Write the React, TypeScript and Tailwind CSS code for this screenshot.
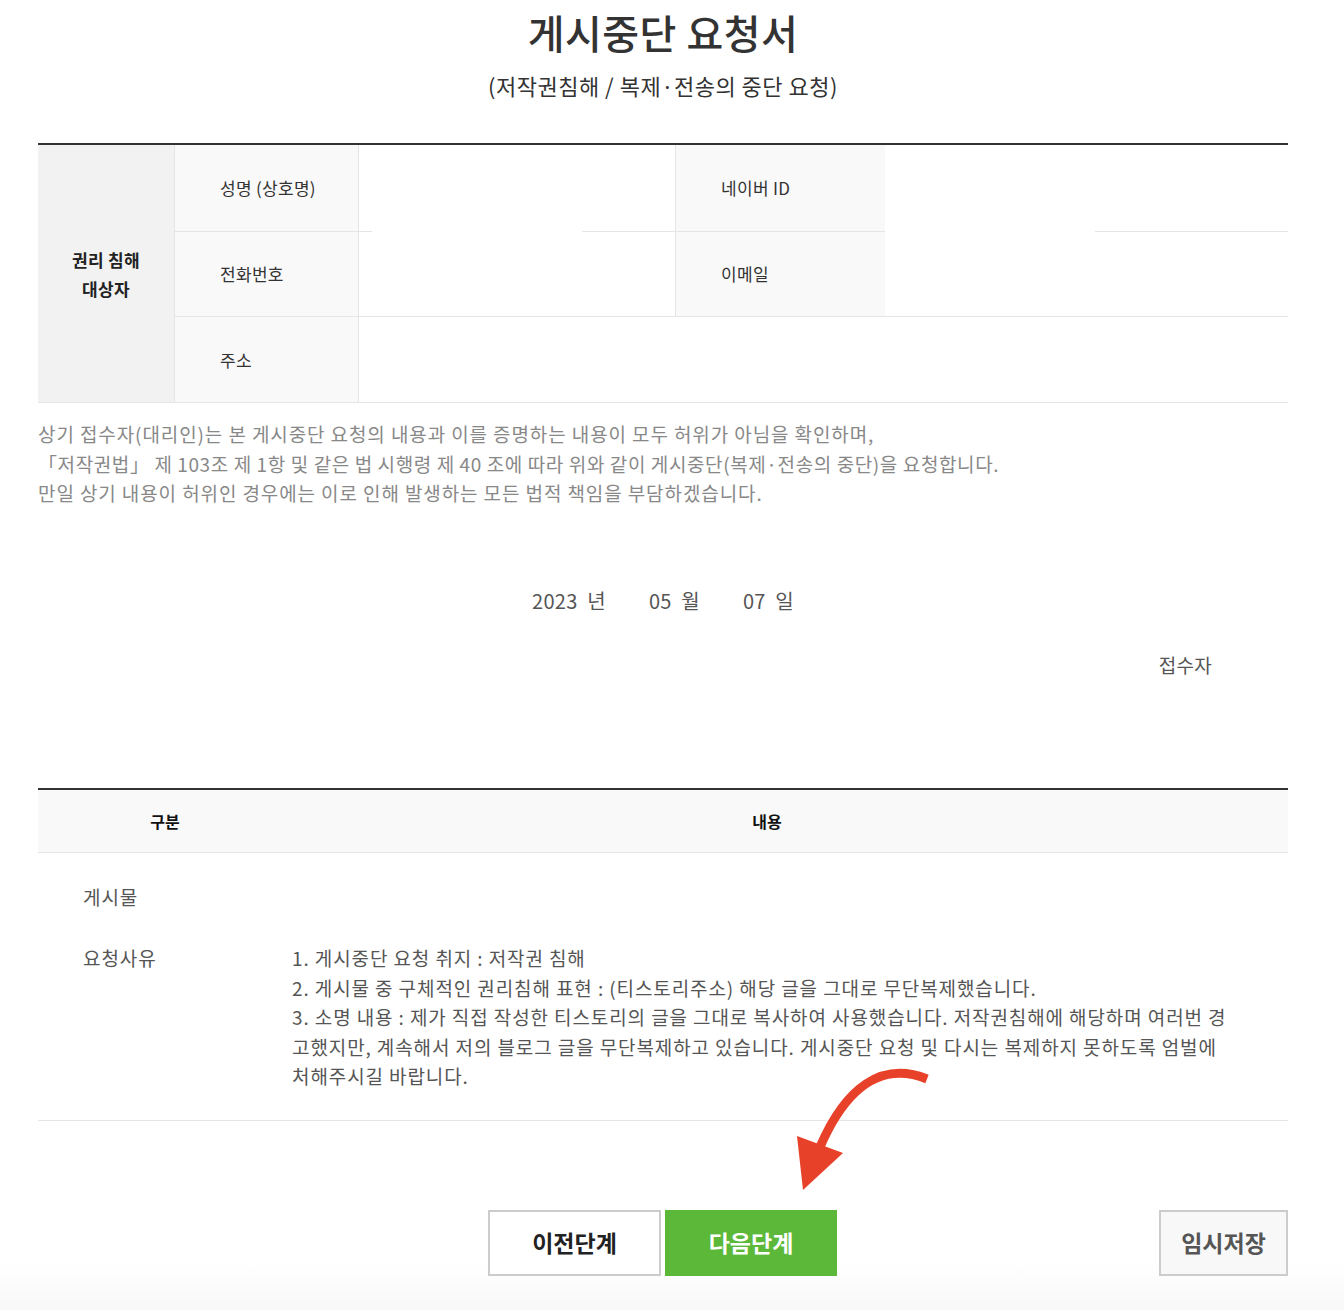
import React from 'react';

const font = "font-['Noto_Sans_CJK_KR','Noto_Sans',sans-serif]";

// 구분 / 내용 표의 요청사유 문단
const reasons = [
  '1. 게시중단 요청 취지 : 저작권 침해',
  '2. 게시물 중 구체적인 권리침해 표현 : (티스토리주소) 해당 글을 그대로 무단복제했습니다.',
  '3. 소명 내용 : 제가 직접 작성한 티스토리의 글을 그대로 복사하여 사용했습니다. 저작권침해에 해당하며 여러번 경고했지만, 계속해서 저의 블로그 글을 무단복제하고 있습니다. 게시중단 요청 및 다시는 복제하지 못하도록 엄벌에 처해주시길 바랍니다.',
];

const LabelCell = ({ children, width }: { children: React.ReactNode; width: string }) => (
  <div className={`${width} shrink-0 flex items-center border-l border-[#e5e5e5] bg-[#f9f9f9] pl-[45px] text-[17px] tracking-[0.3px] text-[#333]`}>
    {children}
  </div>
);

const RowDivider = () => (
  // 입력칸에 가려진 구분선 모양 그대로
  <div className="flex h-px">
    <div className="w-[198px] bg-[#e5e5e5]" />
    <div className="w-[210px]" />
    <div className="w-[303px] bg-[#e5e5e5]" />
    <div className="w-[210px]" />
    <div className="flex-1 bg-[#e5e5e5]" />
  </div>
);

const ArrowMark = () => (
  <svg className="absolute left-[790px] top-[1065px]" width="150" height="130" viewBox="0 0 150 130" fill="none">
    <path d="M137 14 C92 -4 56 22 30 82" stroke="#e8412a" strokeWidth="9" fill="none" />
    <polygon points="7,71 53,88 13,125" fill="#e8412a" />
  </svg>
);

const App = () => {
  return (
    <div className={`${font} relative min-h-[1310px] bg-[linear-gradient(to_bottom,#ffffff_1262px,#f8f8f8_1310px)]`}>
      <div className="ml-[38px] w-[1250px]">
        <div className="pt-[8px] text-center">
          <h1 className="text-[40px] leading-[48px] font-medium tracking-[0.5px] text-[#333]">게시중단 요청서</h1>
          <p className="mt-[14px] text-[22px] leading-[30px] tracking-[0.5px] text-[#333]">(저작권침해 / 복제·전송의 중단 요청)</p>
        </div>

        {/* 권리 침해 대상자 */}
        <div className="mt-[43px] flex border-t-2 border-[#333] border-b border-b-[#e5e5e5]">
          <div className="w-[136px] shrink-0 flex items-center justify-center bg-[#f2f2f2] text-center text-[17px] font-bold leading-[29px] tracking-[0.3px] text-[#222]">
            권리 침해<br />대상자
          </div>
          <div className="flex-1">
            <div className="flex h-[86px]">
              <LabelCell width="w-[184px]">성명 (상호명)</LabelCell>
              <div className="w-[317px] shrink-0 border-l border-[#e5e5e5]" />
              <LabelCell width="w-[210px]">네이버 ID</LabelCell>
              <div className="flex-1" />
            </div>
            <RowDivider />
            <div className="flex h-[85px] border-b border-[#e5e5e5]">
              <LabelCell width="w-[184px]">전화번호</LabelCell>
              <div className="w-[317px] shrink-0 border-l border-[#e5e5e5]" />
              <LabelCell width="w-[210px]">이메일</LabelCell>
              <div className="flex-1" />
            </div>
            <div className="flex h-[85px]">
              <LabelCell width="w-[184px]">주소</LabelCell>
              <div className="flex-1 border-l border-[#e5e5e5]" />
            </div>
          </div>
        </div>

        <div className="mt-[16px] text-[19px] leading-[29.5px] tracking-[0.9px] text-[#888]">
          <p>상기 접수자(대리인)는 본 게시중단 요청의 내용과 이를 증명하는 내용이 모두 허위가 아님을 확인하며,</p>
          <p className="tracking-[0.6px]">「저작권법」 제 103조 제 1항 및 같은 법 시행령 제 40 조에 따라 위와 같이 게시중단(복제·전송의 중단)을 요청합니다.</p>
          <p>만일 상기 내용이 허위인 경우에는 이로 인해 발생하는 모든 법적 책임을 부담하겠습니다.</p>
        </div>

        <div className="mt-[78px] flex justify-center gap-[43px] text-[20px] leading-[30px] tracking-[0.3px] text-[#555]">
          <span>2023&nbsp; 년</span>
          <span>05&nbsp; 월</span>
          <span>07&nbsp; 일</span>
        </div>

        <div className="mt-[34px] pr-[76px] text-right text-[19px] leading-[30px] tracking-[0.3px] text-[#555]">접수자</div>

        {/* 구분 / 내용 */}
        <div className="mt-[108px] border-t-2 border-[#333]">
          <div className="flex h-[63px] items-center border-b border-[#e5e5e5] bg-[#f9f9f9] text-[16px] font-bold text-[#111]">
            <div className="w-[254px] text-center">구분</div>
            <div className="flex-1 pr-[46px] text-center">내용</div>
          </div>
          <div className="border-b border-[#e5e5e5] pt-[29px] pb-[29px] text-[19px] leading-[29.5px] tracking-[0.9px] text-[#555]">
            <div className="flex">
              <div className="w-[254px] pl-[45px]">게시물</div>
              <div className="flex-1" />
            </div>
            <div className="mt-[32px] flex">
              <div className="w-[254px] shrink-0 pl-[45px]">요청사유</div>
              <div className="w-[940px] break-all">
                {reasons.map((r) => (
                  <p key={r}>{r}</p>
                ))}
              </div>
            </div>
          </div>
        </div>

        <div className="mt-[89px] flex items-center">
          <div className="ml-[450px] flex gap-[4px]">
            <button className="h-[66px] w-[173px] border-2 border-[#ccc] bg-white text-[23px] font-bold text-[#222]">이전단계</button>
            <button className="h-[66px] w-[172px] bg-[#5cb838] text-[23px] font-bold text-white">다음단계</button>
          </div>
          <div className="flex-1" />
          <button className="h-[66px] w-[129px] border-2 border-[#ccc] bg-[#f8f8f8] text-[23px] font-bold text-[#555]">임시저장</button>
        </div>
      </div>
      <ArrowMark />
    </div>
  );
};

export default App;
